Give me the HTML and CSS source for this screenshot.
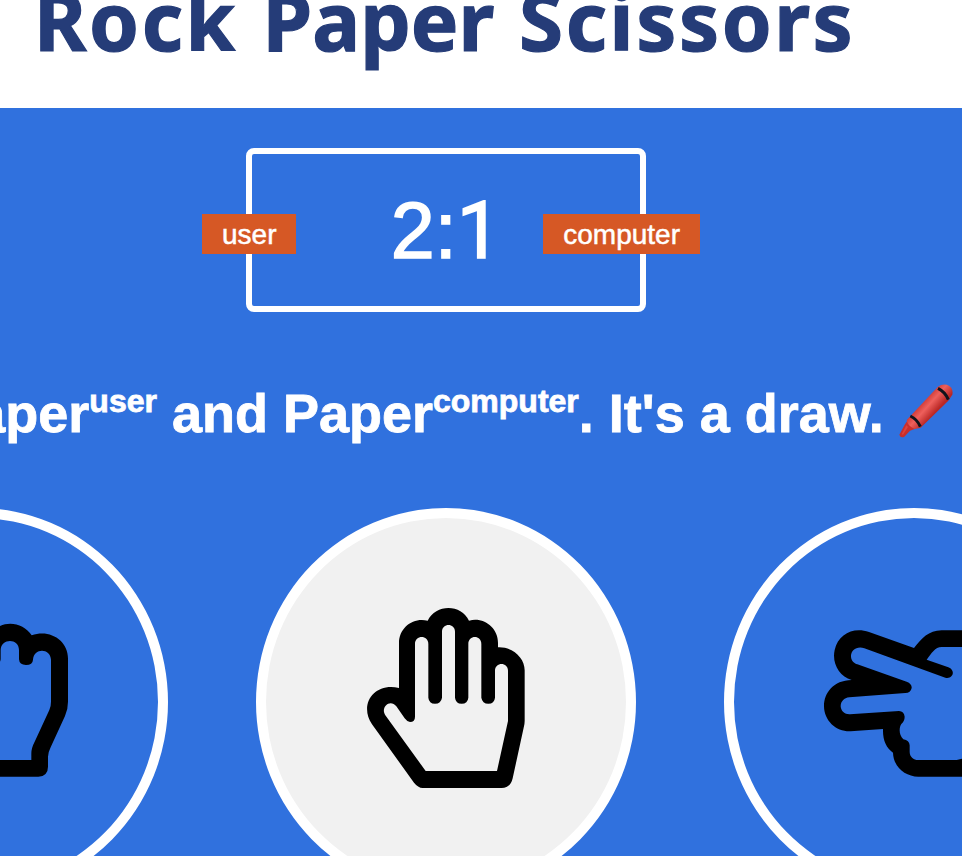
FILE: index.html
```html
<!DOCTYPE html>
<html lang="en">
<head>
<meta charset="utf-8">
<title>Rock Paper Scissors</title>
<link rel="stylesheet" href="styles.css">
</head>
<body>
<header class="header"><h1 class="title"><span class="wide">Rock</span> Paper <span class="wide">Scissors</span></h1></header>
<main class="game">
  <section class="scoreboard">
    <div class="badge badge-user">user</div>
    <div class="badge badge-computer">computer</div>
    <span class="score">2:<span class="digit-one">1</span></span>
  </section>
  <p class="result"><span>Paper<sup>user</sup> and Paper<sup>computer</sup>. It's a draw. </span><svg class="crayon" viewBox="44 29 162 162" role="img" aria-label="crayon">
    <defs><linearGradient id="wax" gradientUnits="userSpaceOnUse" x1="115" y1="84" x2="151" y2="116"><stop offset="0" stop-color="#d23c38"/><stop offset="0.4" stop-color="#ee605c"/><stop offset="1" stop-color="#b92725"/></linearGradient></defs>
    <path fill="#c92f2b" d="M45 181 61 151 69 139Q77 128 91 136L103 151 93 163 77 169 60 187Q48 192 45 181Z"/>
    <path fill="#dc433d" d="M52 180 66 153 71 158 56 181Z"/>
    <path fill="url(#wax)" d="M67 137 160 38Q178 25 195 35 207 44 204 61L192 79 109 160 91 164Q70 156 67 137Z"/>
    <path fill="none" stroke="#10131b" stroke-width="9" d="M78 125Q98 134 108 157M161 42Q183 53 192 76"/>
  </svg></p>
  <section class="choices">
    <button class="choice" aria-label="Rock"><svg class="hand" viewBox="-366 -36 600 600"><path d="M115 500Q144 498 144 470V440Q144 428 152 412L195 318Q204 298 204 275V145C204 92 150 56 95 76C75 44 32 32 0 48C-35 20-85 22-108 50C-150 30-210 55-210 110C-265 105-300 145-300 190V280Q-300 320-275 345L-200 430V470Q-198 500-170 500ZM94 450V430Q94 414 104 395L148 300Q153 290 153 275V149C151 113 101 113 99 149Q98 165 78 165Q58 165 57 148V120C57 84 3 84 2 120V148Q0 165-20 165Q-40 165-42 148V115C-45 82-95 82-98 115V150C-100 165-135 165-140 150V125C-145 95-160 95-160 125V220H-210C-220 155-250 160-250 195V280Q-250 300-235 315L-150 415V450Z"/></svg></button>
    <button class="choice choice-active" aria-label="Paper"><svg class="hand" viewBox="-12 9 600 600"><path d="M147 279V144C147 98 189 66 233 77C257 26 334 26 357 77C402 65 444 99 444 143V157C490 155 524 190 524 226V378Q524 388 521 398L488 550Q482 578 455 579H218Q204 578 192 563L66 388C25 326 75 261 147 279ZM195 365V147C195 119 235 119 235 147V308Q237 326 255 326Q273 326 276 308V110C276 83 315 83 315 110V308Q317 326 335 326Q353 326 355 308V147C355 119 394 119 394 147V308Q397 326 415 326Q433 326 435 308V227C435 200 474 200 474 227V378L441 528H227L106 361C90 336 121 310 139 334L164 370Q172 381 180 381Q195 381 195 365Z"/></svg></button>
    <button class="choice" aria-label="Scissors"><svg class="hand" viewBox="12 -36 600 600"><path d="M590 61H395C355 61 335 86 312 114L177 66C130 50 85 72 74 120C65 160 88 200 125 210C70 211 42 249 42 288C42 333 80 366 122 364L219 357C218 391 229 413 249 428C250 470 285 500 325 500H590ZM540 111V440H480L440 450H325C310 450 299 440 299 425V406Q298 391 280 388C266 376 267 352 274 342Q284 333 284 320Q282 304 267 303L120 313C105 314 93 304 92 289C92 274 102 264 118 262L286 249Q302 249 305 234Q306 221 290 215L142 163C132 160 124 152 123 140C122 122 140 107 163 115L406 203C428 209 439 181 415 172L350 149C365 130 375 111 395 111Z"/></svg></button>
  </section>
</main>
</body>
</html>
```
FILE: styles.css
```css
* {
  box-sizing: border-box;
}

body {
  margin: 0;
  height: 856px;
  overflow: hidden;
  background: #3071de;
  color: #fff;
  font-family: "Liberation Sans", Arial, sans-serif;
}

.header {
  display: flex;
  align-items: flex-end;
  height: 108px;
  padding: 0 0 38px 34px;
  background: #fff;
}

.title {
  margin: 0;
  color: #253c78;
  font: 700 80px/100px "Noto Sans", sans-serif;
  white-space: nowrap;
  word-spacing: 4px;
  -webkit-text-stroke: 1.2px;
}

.wide {
  letter-spacing: 2.6px;
}

.game {
  display: flex;
  flex-direction: column;
  align-items: center;
  width: 892px;
  padding-top: 40px;
}

.scoreboard {
  position: relative;
  display: flex;
  justify-content: center;
  align-items: center;
  width: 400px;
  height: 164px;
  border: 6px solid #fff;
  border-radius: 8px;
}

.score {
  padding-top: 2px;
  font-size: 79px;
  line-height: 92px;
  -webkit-text-stroke: 1.6px;
}

.digit-one {
  font-family: Roboto, sans-serif;
}

.badge {
  position: absolute;
  top: 60px;
  height: 40px;
  padding: 0 20px;
  background: #d65825;
  font-size: 28px;
  line-height: 42px;
  -webkit-text-stroke: 0.5px;
}

.badge-user {
  left: -50px;
}

.badge-computer {
  right: -60px;
}

.result {
  height: 80px;
  margin: 61px 0 0;
  font-size: 54px;
  font-weight: 700;
  line-height: 80px;
  white-space: nowrap;
  -webkit-text-stroke: 0.8px;
}

.result sup {
  font-size: 32px;
  line-height: 0;
  vertical-align: 20px;
}

.crayon {
  width: 54px;
  height: 54px;
  vertical-align: -6px;
}

.choices {
  display: flex;
  justify-content: center;
  gap: 88px;
  width: 100%;
  margin-top: 55px;
}

.choice {
  display: flex;
  flex: none;
  justify-content: center;
  align-items: center;
  width: 380px;
  height: 388px;
  padding: 0 0 8px;
  border: 10px solid #fff;
  border-radius: 50%;
  background: transparent;
}

.choice-active {
  background: #f1f1f1;
}

.hand {
  width: 200px;
  height: 200px;
  fill: #000;
  fill-rule: evenodd;
}
```
